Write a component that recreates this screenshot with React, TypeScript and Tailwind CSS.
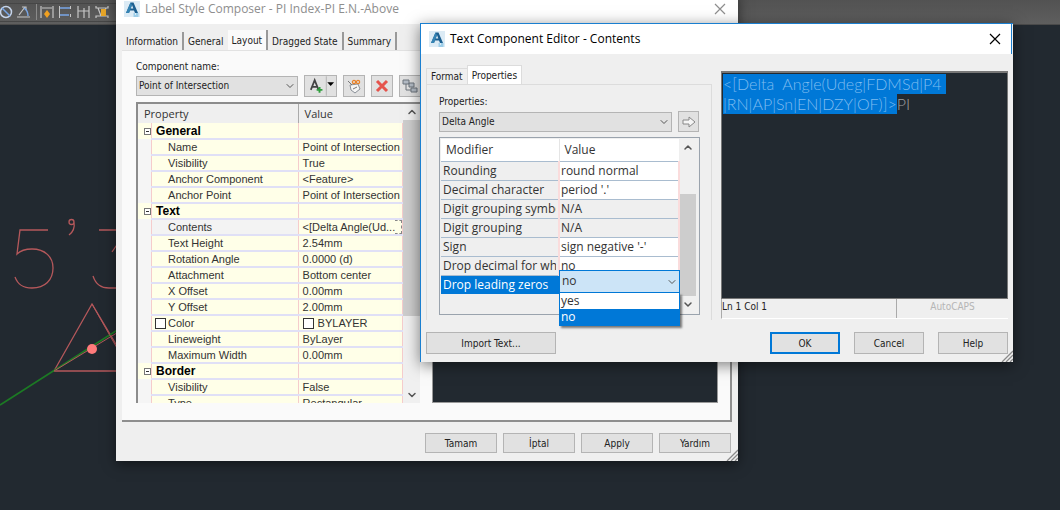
import React, { useEffect, useRef } from "react";
import { ChevronDown, ChevronUp } from "lucide-react";

const titleFont = "font-['Open_Sans','Noto_Sans',sans-serif]";
const dialogFont = "font-['DejaVu_Sans_Condensed','Roboto',sans-serif]";

type Row = { name: string; value?: string; group?: boolean; swatch?: boolean; active?: boolean };

const properties: Row[] = [
  { name: "General", group: true },
  { name: "Name", value: "Point of Intersection" },
  { name: "Visibility", value: "True" },
  { name: "Anchor Component", value: "<Feature>" },
  { name: "Anchor Point", value: "Point of Intersection" },
  { name: "Text", group: true },
  { name: "Contents", value: "<[Delta Angle(Ud...", active: true },
  { name: "Text Height", value: "2.54mm" },
  { name: "Rotation Angle", value: "0.0000 (d)" },
  { name: "Attachment", value: "Bottom center" },
  { name: "X Offset", value: "0.00mm" },
  { name: "Y Offset", value: "2.00mm" },
  { name: "Color", value: "BYLAYER", swatch: true },
  { name: "Lineweight", value: "ByLayer" },
  { name: "Maximum Width", value: "0.00mm" },
  { name: "Border", group: true },
  { name: "Visibility", value: "False" },
  { name: "Type", value: "Rectangular" },
];

const modifiers = [
  { name: "Rounding", value: "round normal" },
  { name: "Decimal character", value: "period '.'" },
  { name: "Digit grouping symbol", value: "N/A", disabled: true },
  { name: "Digit grouping", value: "N/A", disabled: true },
  { name: "Sign", value: "sign negative '-'" },
  { name: "Drop decimal for whole numbers", value: "no" },
];

const CONTENTS = "<[Delta  Angle(Udeg|FDMSd|P4|RN|AP|Sn|EN|DZY|OF)]>";

function AppLogo() {
  return (
    <svg viewBox="0 0 16 16" className="w-4 h-4 shrink-0" aria-hidden="true">
      <rect width="16" height="16" fill="#dcebf5" />
      <path d="M2 12 6.500 1.500h3L14 12h-3l-1-2.500H6L5 12z" fill="#1c5f90" />
      <path d="m6.700 7.500 1.300-3.500 1.300 3.500z" fill="#dcebf5" />
      <path d="M2 12 6.500 1.500 8 4 5 12z" fill="#3584b4" />
      <path d="M9.500 13h1.500M12 13h2.500M9.500 15h5" stroke="#5fb0dc" strokeWidth="1" />
    </svg>
  );
}

function CloseIcon() {
  return (
    <svg viewBox="0 0 12 12" className="w-3 h-3" fill="none" stroke="currentColor" strokeWidth="1.2">
      <path d="m1 1 10 10M11 1 1 11" />
    </svg>
  );
}

function ResizeGrip() {
  return (
    <svg
      viewBox="0 0 12 12"
      className="absolute right-0 bottom-0 w-3 h-3"
      stroke="#8a8a8a"
      strokeWidth="1.3"
      aria-hidden="true"
    >
      <path d="M1 12 12 1M5 12l7-7M9 12l3-3" />
    </svg>
  );
}

function DialogButton({ label, className }: { label: string; className: string }) {
  return (
    <button
      type="button"
      className={`flex items-center justify-center bg-[#e1e1e1] border text-[10px] text-[#222] ${className}`}
    >
      {label}
    </button>
  );
}

function Combo({ id, value, className }: { id: string; value: string; className: string }) {
  return (
    <div className={`relative ${className}`}>
      <select
        id={id}
        defaultValue={value}
        className="appearance-none block w-full h-5 pl-[2px] bg-[#e1e1e1] border border-[#b4b4b4] text-[10px] leading-4 text-[#222]"
      >
        <option>{value}</option>
      </select>
      <ChevronDown
        className="absolute right-[2px] top-1 w-3 h-3 text-[#555] pointer-events-none"
        strokeWidth={2}
      />
    </div>
  );
}

function Drawing() {
  return (
    <svg
      className="absolute left-0 top-0 w-[130px] h-[510px]"
      viewBox="0 0 130 510"
      fill="none"
      aria-hidden="true"
    >
      <g stroke="#b5585b" strokeWidth="1.3">
        <path d="M48 230H20L17 254c4-4 8-5 15-5 13 0 21 8 21 19 0 12-8 20-21 20-9 0-14-3-17-11" />
        <path d="M74 222a2.500 2.500 0 1 1-5 0 2.500 2.500 0 0 1 5 0c1 6-1 10-5 13" />
        <path d="M99 230h28L112 252M93 276c3 9 8 12 16 12h14" />
        <path d="m92 304-38 67h78z" />
      </g>
      <path d="M0 405 130 322" stroke="#1c7a24" strokeWidth="1.8" />
      <path d="m92 304 38 67M54 371l76-46" stroke="#b5585b" strokeWidth="1" />
      <circle cx="92" cy="349" r="5" fill="#ff7b7b" />
    </svg>
  );
}

function Toolbar() {
  return (
    <div className="h-[25px] bg-gradient-to-b from-[#525252] to-[#5e5e5e] border-b border-[#4a4a4a]">
      <svg viewBox="0 0 120 24" className="w-[120px] h-6" fill="none" aria-hidden="true">
        <path d="M0 3.500h116M0 21.500h116" stroke="#464646" />
        <g stroke="#c6c6c6" strokeWidth="1.2">
          <path d="M17 17h13M19 15l6-8M22 7h4v3" />
          <path d="M41 6v12M53 6v12M42 8h10M78 6v12M84 8v10M89 6v12M78 11h11" />
          <path d="M96 6v2h12V6M96 18v-2h12v2M98 8l3 8M106 8l-3 8" />
        </g>
        <g stroke="#79a7e8" strokeWidth="1.5">
          <circle cx="6" cy="12" r="5.500" stroke="#c6d4ea" />
          <path d="m2 8 8 8M24 8c3 2 4 5 4 8M60 8h11M60 15h9" />
        </g>
        <path d="M59.500 6v12M70.500 6v3M70.500 14v3" stroke="#c6c6c6" />
        <path d="M36.500 4v16" stroke="#8a8a8a" />
        <path d="m47 10 3 4-3 4-3-4z" fill="#f0a020" />
        <path d="M101 9h5v7h-5z" fill="#e8a628" />
      </svg>
    </div>
  );
}

function PropertyGrid() {
  return (
    <div className="flex w-[284px] h-[301px] overflow-hidden border-t-2 border-l-2 border-[#8c8c8c] bg-[#f5f5f5]">
      <table className="flex-1 table-fixed border-collapse self-start font-['Liberation_Sans',Arial,sans-serif] text-[11px] text-[#333]">
        <colgroup>
          <col className="w-[13px]" />
          <col className="w-[146px]" />
          <col className="w-[104px]" />
        </colgroup>
        <thead>
          <tr className={`h-[19px] bg-[#efefef] text-left ${titleFont}`}>
            <th colSpan={2} className="p-0 pl-[6px] font-normal leading-4 border-r border-[#aaa]">
              Property
            </th>
            <th className="p-0 pl-[6px] font-normal leading-4">Value</th>
          </tr>
        </thead>
        <tbody>
          {properties.map((row, i) => (
            <tr key={i} className="h-4">
              <td className={`p-0 border-r border-[#f5cccc] ${row.group ? "bg-[#ffffe8]" : ""}`}>
                {row.group && (
                  <button
                    type="button"
                    aria-label={`Collapse ${row.name}`}
                    className="flex items-center justify-center ml-[6px] w-[7px] h-[7px] border border-[#777] bg-white"
                  >
                    <span className="w-[3px] h-px bg-[#333]" />
                  </button>
                )}
              </td>
              <td className="p-0 border-r border-r-[#f5cccc] border-b-2 border-b-[#e0e0f6] bg-[#ffffe8] leading-[14px]">
                {row.group ? (
                  <span className="pl-1 font-bold text-[12px] text-black">{row.name}</span>
                ) : (
                  <span className={`flex items-center h-[14px] ${row.active ? "bg-[#f3f3f3]" : ""}`}>
                    <span className="flex justify-end w-4 pr-[2px]">
                      {row.swatch && <span className="w-[11px] h-[11px] border border-[#333] bg-white" />}
                    </span>
                    {row.name}
                  </span>
                )}
              </td>
              <td className="p-0 pl-1 border-r border-r-[#f5cccc] border-b-2 border-b-[#e0e0f6] bg-[#ffffe8] leading-[14px] whitespace-nowrap">
                <span className="flex items-center">
                  {row.swatch && <span className="w-[11px] h-[11px] mr-1 border border-[#333] bg-white" />}
                  {row.value}
                  {row.active && <span className="flex-1 h-[14px] border border-l-0 border-dashed border-[#888]" />}
                </span>
              </td>
            </tr>
          ))}
        </tbody>
      </table>
      <div className="flex flex-col w-[17px] bg-[#f0f0f0] text-[#555]">
        <ChevronUp className="w-3 h-4 mx-auto shrink-0" strokeWidth={3} />
        <div className="h-[196px] bg-[#cdcdcd]" />
        <ChevronDown className="w-3 h-4 mx-auto mt-auto shrink-0" strokeWidth={3} />
      </div>
    </div>
  );
}

function LabelStyleComposer() {
  const tool =
    "flex items-center justify-center h-[22px] bg-[#e1e1e1] border border-[#b4b4b4]";
  return (
    <section
      className={`absolute left-[116px] -top-[7px] w-[622px] bg-[#efefef] shadow-[0_3px_12px_rgba(0,0,0,0.5)] text-[10px] text-[#222] ${dialogFont}`}
    >
      <header className={`flex items-center h-[31px] pl-2 pr-3 bg-white text-[12px] text-[#8e8e8e] ${titleFont}`}>
        <AppLogo />
        <h1 className="ml-[5px] flex-1">Label Style Composer - PI Index-PI E.N.-Above</h1>
        <button type="button" aria-label="Close">
          <CloseIcon />
        </button>
      </header>
      <div className="px-[6px] pt-[6px]">
        <div role="tablist" className="flex items-end">
          <button role="tab" className="h-[18px] px-1 border-r-2 border-[#999]">Information</button>
          <button role="tab" className="h-[18px] px-1">General</button>
          <button role="tab" aria-selected="true" className="h-5 px-1 bg-[#fafafa] border-r-2 border-[#999]">Layout</button>
          <button role="tab" className="h-[18px] px-1 border-r-2 border-[#999]">Dragged State</button>
          <button role="tab" className="h-[18px] px-1 border-r-2 border-[#999]">Summary</button>
        </div>
        <div className="h-[372px] pl-[14px] pt-2 bg-[#fafafa] border-t border-t-[#e2e2e2] border-r-2 border-b-2 border-[#8e8e8e]">
          <label htmlFor="component" className="block leading-4">Component name:</label>
          <div className="flex items-center">
            <Combo id="component" value="Point of Intersection" className="w-[162px] mr-[6px]" />
            <button type="button" aria-label="Add component" className={`${tool} w-[33px] mr-[6px]`}>
              <svg viewBox="0 0 32 20" className="w-8 h-5" fill="none">
                <path d="m6 14 4-10 4 10M7 11h6" stroke="#444" strokeWidth="1.8" />
                <path d="M15 11v6M12 14h6" stroke="#2f9e3c" strokeWidth="2" />
                <path d="M22 0v20" stroke="#b4b4b4" />
                <path d="M23 6h7l-3.500 4z" fill="#000" />
              </svg>
            </button>
            <button type="button" aria-label="Copy component" className={`${tool} w-[22px] mr-[6px]`}>
              <svg viewBox="0 0 16 16" className="w-4 h-4" fill="none">
                <path d="m4 7 8-1 2 5-5 4-4-3z" fill="#f5f5f5" stroke="#8a9098" />
                <path d="m2 3 4 4M7 11l4-2" stroke="#777" />
                <circle cx="8" cy="4" r="1.600" stroke="#e8822a" strokeWidth="1.3" />
                <circle cx="12" cy="4" r="1.600" stroke="#e8822a" strokeWidth="1.3" />
              </svg>
            </button>
            <button type="button" aria-label="Delete component" className={`${tool} w-[22px] mr-[6px]`}>
              <svg viewBox="0 0 16 16" className="w-4 h-4">
                <path d="m3 3 10 10M13 3 3 13" stroke="#e5534c" strokeWidth="3" />
              </svg>
            </button>
            <button type="button" aria-label="Component draw order" className={`${tool} w-[22px]`}>
              <svg viewBox="0 0 16 16" className="w-4 h-4" fill="#b4bcc6" stroke="#6c747c">
                <path d="M4 6v6h5" fill="none" />
                <path d="M1 2h6v4H1zM7 5h5v4H7zM9 10h6v4H9z" />
              </svg>
            </button>
          </div>
          <div className="flex gap-3 mt-[5px]">
            <PropertyGrid />
            <div className="flex-1 mr-3 bg-[#222930] border border-[#999]" />
          </div>
        </div>
        <footer className="flex justify-end gap-[6px] pt-[11px] pr-px pb-2">
          {["Tamam", "İptal", "Apply", "Yardım"].map((label) => (
            <DialogButton key={label} label={label} className="w-[72px] h-5 border-[#b4b4b4]" />
          ))}
        </footer>
      </div>
      <ResizeGrip />
    </section>
  );
}

function ModifierGrid() {
  return (
    <div className="flex w-[261px] h-[178px] p-px border border-[#9aa3ad] bg-[#efefef]">
      <div className="flex-1">
        <table className={`w-full table-fixed border-collapse text-[12px] text-[#333] ${titleFont}`}>
          <thead>
            <tr className="h-[22px] bg-white text-left">
              <th className="p-0 pl-[5px] w-[118px] font-normal border-r border-[#e5e5e5]">Modifier</th>
              <th className="p-0 pl-[5px] font-normal">Value</th>
            </tr>
          </thead>
          <tbody>
            {modifiers.map((row) => (
              <tr key={row.name} className="h-[19px] border-t border-t-[#a9bccf]">
                <td className="p-0 pl-[2px] pr-[2px] border-r-2 border-r-[#fadcdc] leading-[18px]">
                  <span className="block overflow-hidden whitespace-nowrap">{row.name}</span>
                </td>
                <td
                  className={`p-0 pl-px border-r-2 border-r-[#fadcdc] leading-[18px] whitespace-nowrap ${
                    row.disabled ? "" : "bg-white"
                  }`}
                >
                  {row.value}
                </td>
              </tr>
            ))}
            <tr className="h-[19px] border-t border-t-[#a9bccf]">
              <td className="p-0 pl-[2px] bg-[#0078d7] text-white leading-[18px]">
                <label htmlFor="leading-zeros">Drop leading zeros</label>
              </td>
              <td className="relative p-0">
                <div className="absolute left-0 -top-[6px] w-[121px]">
                  <select
                    id="leading-zeros"
                    defaultValue="no"
                    className="appearance-none block w-full h-[23px] pl-[2px] bg-[#cce4f7] border border-[#0078d7] text-[12px]"
                  >
                    <option>yes</option>
                    <option>no</option>
                  </select>
                  <ChevronDown className="absolute right-[2px] top-[6px] w-3 h-3 text-[#555] pointer-events-none" />
                  <ul
                    role="listbox"
                    className="border border-t-0 border-[#0078d7] bg-white leading-4 shadow-[2px_2px_2px_rgba(0,0,0,0.5)]"
                  >
                    <li role="option" className="pl-px">yes</li>
                    <li role="option" aria-selected="true" className="pl-px bg-[#0078d7] text-white">no</li>
                  </ul>
                </div>
              </td>
            </tr>
          </tbody>
        </table>
      </div>
      <div className="flex flex-col w-[18px] pr-[2px] bg-[#f0f0f0] text-[#555]">
        <ChevronUp className="w-3 h-[17px] mx-auto shrink-0" strokeWidth={3} />
        <div className="flex-1 mt-[38px] bg-[#cdcdcd]" />
        <ChevronDown className="w-3 h-[17px] mx-auto shrink-0" strokeWidth={3} />
      </div>
    </div>
  );
}

function ContentsEditor() {
  const ref = useRef<HTMLTextAreaElement>(null);

  // open with the whole field expression selected
  useEffect(() => {
    ref.current?.focus();
    ref.current?.setSelectionRange(0, CONTENTS.length);
  }, []);

  return (
    <div className="flex-1 flex flex-col">
      <textarea
        ref={ref}
        aria-label="Label contents"
        spellCheck={false}
        defaultValue={CONTENTS + "PI"}
        className="block h-[228px] resize-none outline-none pl-px pr-16 pt-px bg-[#222930] border border-t-2 border-[#777] break-all font-['Lato',sans-serif] font-light text-[16px] leading-5 text-[#a0a0a0] selection:bg-[#0078d7] selection:text-[#7fbcf0]"
      />
      <div className="flex h-5 border-l border-b border-l-[#aaa] border-b-white">
        <span className="flex-1 border-r border-[#aaa] leading-4">Ln 1 Col 1</span>
        <span className="w-[111px] text-center leading-4 text-[#b5b5b5]">AutoCAPS</span>
      </div>
    </div>
  );
}

function TextComponentEditor() {
  return (
    <section
      className={`absolute left-[420px] top-[23px] w-[593px] bg-[#efefef] border-t border-l border-[#1a7fd0] shadow-[0_3px_14px_rgba(0,0,0,0.5)] text-[10px] text-[#222] ${dialogFont}`}
    >
      <header className={`flex items-center h-[30px] pl-2 pr-[10px] mr-px bg-white border-r border-[#1a7fd0] text-[12px] text-black ${titleFont}`}>
        <AppLogo />
        <h2 className="ml-[5px] flex-1">Text Component Editor - Contents</h2>
        <button type="button" aria-label="Close">
          <CloseIcon />
        </button>
      </header>
      <div className="pl-[5px] pr-[5px] pt-[11px] pb-2">
        <div className="flex gap-[9px]">
          <div className="w-[286px]">
            <div role="tablist" className="flex items-end">
              <button role="tab" className="h-4 px-1 border-t border-l border-[#dcdcdc]">Format</button>
              <button role="tab" aria-selected="true" className="h-[19px] px-1 bg-white border border-b-0 border-[#dcdcdc]">
                Properties
              </button>
            </div>
            <div className="px-3 pt-2 pb-[5px] border border-b-0 border-[#dcdcdc]">
              <label htmlFor="property" className="block leading-[18px]">Properties:</label>
              <div className="flex items-center justify-between mb-[5px]">
                <Combo id="property" value="Delta Angle" className="w-[233px]" />
                <button
                  type="button"
                  aria-label="Insert property"
                  className="flex items-center justify-center w-[21px] h-[21px] bg-[#e1e1e1] border border-[#b4b4b4]"
                >
                  <svg viewBox="0 0 14 12" className="w-[14px] h-3" fill="#f5f5f5" stroke="#888">
                    <path d="M1 4h6V1l6 5-6 5V8H1z" />
                  </svg>
                </button>
              </div>
              <ModifierGrid />
            </div>
          </div>
          <div className="flex flex-1 pt-[6px]">
            <ContentsEditor />
          </div>
        </div>
        <footer className="flex gap-[14px] mt-3">
          <DialogButton label="Import Text..." className="w-[130px] h-[22px] mr-auto border-[#b4b4b4]" />
          <DialogButton label="OK" className="w-[70px] h-[22px] border-2 border-[#0078d7]" />
          <DialogButton label="Cancel" className="w-[70px] h-[22px] border-[#b4b4b4]" />
          <DialogButton label="Help" className="w-[70px] h-[22px] border-[#b4b4b4]" />
        </footer>
      </div>
      <ResizeGrip />
    </section>
  );
}

export default function App() {
  return (
    <main className="relative min-h-screen overflow-hidden bg-[#222930]">
      <Toolbar />
      <Drawing />
      <LabelStyleComposer />
      <TextComponentEditor />
    </main>
  );
}
